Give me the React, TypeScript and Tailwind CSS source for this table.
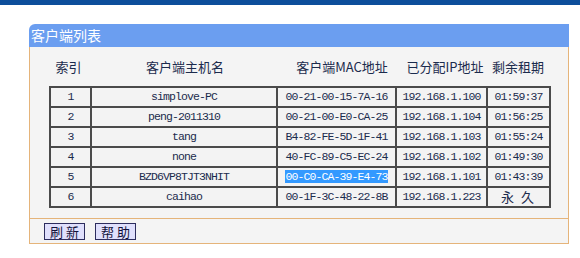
const rows = [
  { idx: "1", host: "simplove-PC", mac: "00-21-00-15-7A-16", ip: "192.168.1.100", lease: "01:59:37" },
  { idx: "2", host: "peng-2011310", mac: "00-21-00-E0-CA-25", ip: "192.168.1.104", lease: "01:56:25" },
  { idx: "3", host: "tang", mac: "B4-82-FE-5D-1F-41", ip: "192.168.1.103", lease: "01:55:24" },
  { idx: "4", host: "none", mac: "40-FC-89-C5-EC-24", ip: "192.168.1.102", lease: "01:49:30" },
  { idx: "5", host: "BZD6VP8TJT3NHIT", mac: "00-C0-CA-39-E4-73", ip: "192.168.1.101", lease: "01:43:39", selected: true },
  { idx: "6", host: "caihao", mac: "00-1F-3C-48-22-8B", ip: "192.168.1.223", lease: "永 久" },
];

const cjk = "font-['Noto_Sans_CJK_SC',sans-serif]";
const mono = "font-['Liberation_Mono','Noto_Sans_CJK_SC',monospace] text-[11.5px] tracking-[-0.9px]";

function App() {
  return (
    <div className="w-[580px] h-[258px] bg-white overflow-hidden">
      <div className="h-[5px] bg-[#0d4e9b]" />
      <div className="ml-[29px] mt-[19px] w-[540px]">
        <div
          className={`h-[23px] rounded-tl-[6px] bg-[#6b9ef0] text-white text-[14px] leading-[23px] pl-[2px] ${cjk}`}
        >
          客户端列表
        </div>
        <div className="border-x border-b border-[#e5b47a] bg-[#f4f4f4]">
          <div
            className={`ml-[19px] h-[39px] grid grid-cols-[39px_194px_120px_86px_60px] items-center text-center text-[13px] text-[#1b2b4d] ${cjk}`}
          >
            <span>索引</span>
            <span>客户端主机名</span>
            <span>客户端MAC地址</span>
            <span>已分配IP地址</span>
            <span>剩余租期</span>
          </div>
          <table className="ml-[19px] w-[500px] table-fixed border-collapse border-2 border-[#4a4a4a] text-[#1b2b4d]">
            <colgroup>
              <col className="w-[41px]" />
              <col className="w-[186px]" />
              <col className="w-[119px]" />
              <col className="w-[91px]" />
              <col className="w-[63px]" />
            </colgroup>
            <tbody>
              {rows.map((r) => (
                <tr key={r.idx} className="h-[20px] bg-[#f3f3f3]">
                  <td className={`border-2 border-[#4a4a4a] p-0 text-center leading-[16px] ${mono}`}>{r.idx}</td>
                  <td className={`border-2 border-[#4a4a4a] p-0 text-center leading-[16px] ${mono}`}>{r.host}</td>
                  <td className={`border-2 border-[#4a4a4a] p-0 text-center leading-[16px] ${mono}`}>
                    {r.selected ? (
                      <span className="bg-[#3399ff] text-white">{r.mac}</span>
                    ) : (
                      r.mac
                    )}
                  </td>
                  <td className={`border-2 border-[#4a4a4a] p-0 text-center leading-[16px] ${mono}`}>{r.ip}</td>
                  <td
                    className={`border-2 border-[#4a4a4a] p-0 text-center leading-[16px] ${
                      r.lease === "永 久" ? `${cjk} text-[13px] tracking-[2px]` : mono
                    }`}
                  >
                    {r.lease}
                  </td>
                </tr>
              ))}
            </tbody>
          </table>
          <div className="mt-[10px] border-t border-[#e5b47a] h-[25px] flex items-center gap-[10px] pl-[14px]">
            <button
              className={`w-[41px] h-[17px] bg-[#e0e0fc] border border-[#2d2d5e] text-[13px] leading-[15px] tracking-[3px] pl-[3px] text-[#12123a] ${cjk}`}
            >
              刷新
            </button>
            <button
              className={`w-[41px] h-[17px] bg-[#e0e0fc] border border-[#2d2d5e] text-[13px] leading-[15px] tracking-[3px] pl-[3px] text-[#12123a] ${cjk}`}
            >
              帮助
            </button>
          </div>
        </div>
      </div>
    </div>
  );
}

export default App;
